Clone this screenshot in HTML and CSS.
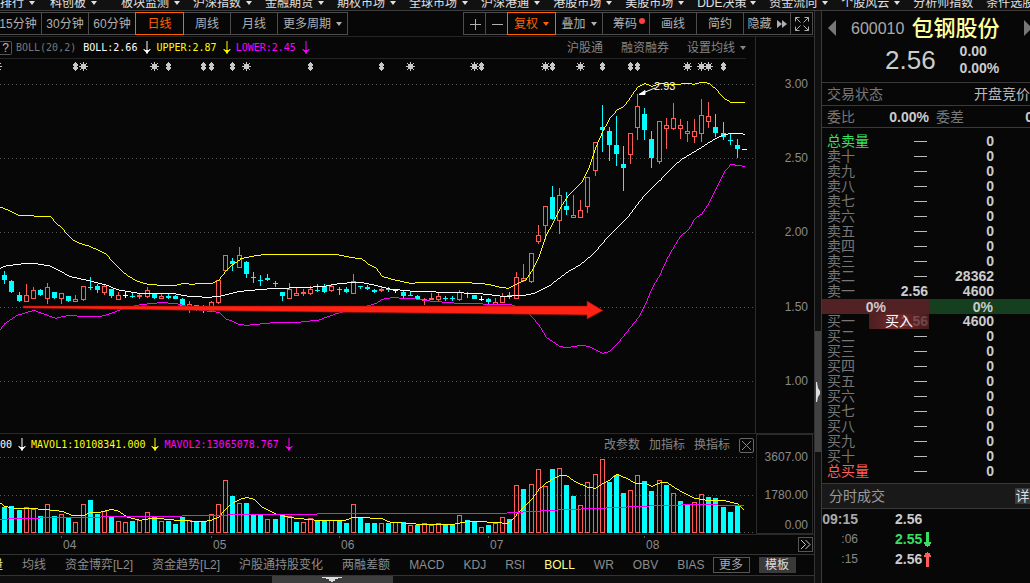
FILE: index.html
```html
<!DOCTYPE html>
<html lang="zh-CN">
<head>
<meta charset="utf-8">
<title>包钢股份 600010</title>
<link rel="stylesheet" href="styles.css">
</head>
<body>
<svg class="defs" aria-hidden="true">
  <symbol id="down" viewBox="0 0 8 14"><path d="M4 0v13M1 8v1h1v1h1v1M7 8v1H6v1H5v1" fill="none" stroke="currentColor"/><path d="M2 9h4v1H5v2H3v-2H2z" fill="currentColor"/></symbol>
</svg>
<div class="app">
  <nav class="menu">
    <a href="#" class="first">排行<i class="caret"></i></a>
    <a href="#" class="loose">科创板<i class="caret"></i></a>
    <a href="#">板块监测<i class="caret"></i></a>
    <a href="#">沪深指数<i class="caret"></i></a>
    <a href="#">金融期货<i class="caret"></i></a>
    <a href="#">期权市场<i class="caret"></i></a>
    <a href="#">全球市场<i class="caret"></i></a>
    <a href="#">沪深港通<i class="caret"></i></a>
    <a href="#">港股市场<i class="caret"></i></a>
    <a href="#">美股市场<i class="caret"></i></a>
    <a href="#"><span class="four">DDE决策</span><i class="caret"></i></a>
    <a href="#">资金流向<i class="caret"></i></a>
    <a href="#">个股风云<i class="caret"></i></a>
    <a href="#">分析师指数</a>
    <a href="#">条件选股</a>
  </nav>
  <div class="body">
    <main class="left">
      <div class="toolbar">
        <div class="group">
          <button class="tool lead">15分钟</button>
          <button class="tool">30分钟</button>
          <button class="tool">60分钟</button>
          <button class="tool on">日线</button>
          <button class="tool">周线</button>
          <button class="tool">月线</button>
          <button class="tool wide">更多周期<i class="caret"></i></button>
        </div>
        <div class="group">
          <button class="tool sq" aria-label="放大"><svg width="12" height="12"><path d="M6.5 1v11M1 6.5h11" stroke="currentColor"/></svg></button>
          <button class="tool sq" aria-label="缩小"><svg width="12" height="12"><path d="M1 6.5h11" stroke="currentColor"/></svg></button>
          <button class="tool on">复权<i class="caret"></i></button>
          <button class="tool">叠加<i class="caret"></i></button>
          <button class="tool">筹码<i class="dot"></i></button>
          <button class="tool">画线</button>
          <button class="tool">简约</button>
          <button class="tool">隐藏<svg width="10" height="8"><path d="M0 0l5 4-5 4zM5 0l5 4-5 4z" fill="currentColor"/></svg></button>
          <button class="tool sq" aria-label="全屏"><svg width="14" height="14" fill="none" stroke="currentColor"><path d="M.5 4.500v-4h4M.5.5l5 5M9.500.5h4v4M13.500.5l-5 5M.5 9.500v4h4M.5 13.500l5-5M13.500 9.500v4h-4M13.500 13.500l-5-5"/></svg></button>
        </div>
      </div>

      <section class="pane">
        <div class="plot">
          <header class="info ruled">
            <button class="help">?</button>
            <span class="mono dim">BOLL(20,2)</span>
            <span class="mono white">BOLL:2.66</span><svg class="down white"><use href="#down"/></svg>
            <span class="mono yellow">UPPER:2.87</span><svg class="down yellow"><use href="#down"/></svg>
            <span class="mono magenta">LOWER:2.45</span><svg class="down magenta"><use href="#down"/></svg>
            <span class="links wider">
              <a href="#">沪股通</a><a href="#">融资融券</a><a href="#">设置均线<i class="caret"></i></a>
            </span>
          </header>
          <svg id="price" class="chart" viewBox="0 59 755 374" preserveAspectRatio="xMaxYMin meet"></svg>
        </div>
        <svg class="axis" viewBox="755 37 59 396" width="59" height="396" preserveAspectRatio="xMinYMin meet">
          <path d="M755.500 37v396" class="rule"/>
          <text x="808" y="88">3.00</text><text x="808" y="162">2.50</text><text x="808" y="236">2.00</text><text x="808" y="311">1.50</text><text x="808" y="385">1.00</text>
        </svg>
      </section>

      <section class="pane">
        <div class="plot">
          <header class="info">
            <span class="mono white">00</span><svg class="down white"><use href="#down"/></svg>
            <span class="mono yellow">MAVOL1:10108341.000</span><svg class="down yellow"><use href="#down"/></svg>
            <span class="mono magenta">MAVOL2:13065078.767</span><svg class="down magenta"><use href="#down"/></svg>
            <span class="links"><a href="#">改参数</a><a href="#">加指标</a><a href="#">换指标</a>
              <button class="close" aria-label="关闭"><svg width="9" height="9"><path d="M0 0l9 9M9 0L0 9" stroke="currentColor"/></svg></button></span>
          </header>
          <svg id="volume" class="chart" viewBox="0 456 755 78" preserveAspectRatio="xMaxYMin meet"></svg>
        </div>
        <svg class="axis" viewBox="755 434 59 100" width="59" height="100">
          <rect x="756.500" y="434.500" width="56" height="99" class="rule"/>
          <text x="808" y="461">3607.00</text><text x="808" y="499">1780.00</text><text x="808" y="529">0.00</text>
        </svg>
      </section>

      <div class="dates">
        <svg id="months" class="chart" viewBox="0 536 755 18" preserveAspectRatio="xMaxYMin meet"></svg>
        <button class="more" aria-label="下一页"><svg width="11" height="11" fill="none" stroke="currentColor"><path d="M1 1l4.500 4.500L1 10M5.500 1L10 5.500 5.500 10"/></svg></button>
      </div>

      <nav class="tabs">
        <a href="#" class="cut active">量</a>
        <a href="#">均线</a><a href="#">资金博弈[L2]</a><a href="#">资金趋势[L2]</a><a href="#">沪股通持股变化</a><a href="#">两融差额</a>
        <a href="#">MACD</a><a href="#">KDJ</a><a href="#">RSI</a><a href="#" class="active">BOLL</a><a href="#">WR</a><a href="#">OBV</a><a href="#">BIAS</a>
        <span class="pair"><button class="box">更多</button><button class="box solid">模板</button></span>
      </nav>
      <div class="drawer"><div class="grip"><svg width="20" height="5"><path d="M0 0h20v1h-4v1h-3v2h-2v1h-2V4H7V2H4V1H0z" fill="#ddd"/></svg></div></div>
    </main>

    <div class="divider"><div class="handle"><svg width="5" height="20"><path d="M1 0h1l1 6 2 3v3l-2 3-1 5H1z" fill="#ddd"/></svg></div></div>

    <aside class="quote">
      <header class="stock">
        <button class="step" aria-label="上一只"><svg width="8" height="16"><path d="M8 0v16L0 8z" fill="#777"/></svg></button>
        <div class="ident">
          <h1><span class="code">600010</span><span class="name">包钢股份</span></h1>
          <div class="last"><span class="price">2.56</span><span class="chg">0.00<br>0.00%</span></div>
        </div>
        <button class="step" aria-label="下一只"><svg width="8" height="16"><path d="M0 0v16l8-8z" fill="#777"/></svg></button>
      </header>
      <div class="state"><span>交易状态</span><span class="phase">开盘竞价</span></div>
      <div class="ratio"><span>委比</span><b>0.00%</b><span>委差</span><b class="edge">0</b></div>
      <div class="book">
        <table id="asks"></table>
        <div class="bar"><b class="sell">0%</b><b class="buy">0%</b></div>
        <div class="bids"><table id="bids"></table><button class="order">买入</button></div>
      </div>
      <div class="title"><span>分时成交</span><button>详</button></div>
      <table class="ticks">
        <tr><td class="big">09:15</td><td>2.56</td></tr>
        <tr><td>:06</td><td class="green">2.55<svg width="8" height="15"><path d="M2 0h3v10h2v2H6v2H4v1H3v-1H1v-2H0v-2h2z" fill="#38e060"/></svg></td></tr>
        <tr><td>:15</td><td>2.56<svg width="8" height="15"><path d="M2 15h3V5h2V3H6V1H4V0H3v1H1v2H0v2h2z" fill="#ff5c57"/></svg></td></tr>
      </table>
    </aside>
  </div>
</div>
<script src="chart.js"></script>
</body>
</html>
```
FILE: styles.css
```css
* { box-sizing: border-box; }
body {
  margin: 0;
  background: #070707;
  color: #9c9c9c;
  font: 12px/16px "Liberation Sans", "Noto Sans CJK SC", sans-serif;
  overflow: hidden;
}
a { color: inherit; text-decoration: none; white-space: nowrap; }
button { font: inherit; color: inherit; background: none; border: 0; padding: 0; white-space: nowrap; }
svg { display: block; flex: none; }
.defs { position: absolute; width: 0; height: 0; }
.app { display: flex; flex-direction: column; height: 100vh; }

.caret {
  display: inline-block;
  border: 3px solid transparent;
  border-top: 4px solid currentColor;
  border-bottom: 0;
}
.white { color: #fff; }
.yellow { color: #ff0; }
.magenta { color: #f0f; }
.green { color: #38e060; }
.dim { color: #777; }

.menu {
  display: flex;
  align-items: flex-end;
  flex: none;
  height: 11px;
  overflow: hidden;
  background: #111;
  border-bottom: 1px solid #3c3c3c;
  color: #e0e0e0;
  line-height: 14px;
}
.menu a { display: flex; flex: none; align-items: center; gap: 5px; padding-right: 13px; }
.menu .first { padding-right: 15px; }
.menu .loose { padding-right: 24px; }
.menu .four { width: 48px; }

.body { display: flex; flex: 1; min-height: 0; }
.left { flex: 1; min-width: 0; display: flex; flex-direction: column; border-right: 1px solid #333; }

.toolbar {
  display: flex;
  justify-content: space-between;
  padding: 1px 1px 1px 0;
  border-bottom: 1px solid #242424;
  color: #b0b0b0;
}
.group { display: flex; }
.tool {
  display: flex;
  align-items: center;
  justify-content: center;
  gap: 5px;
  width: 48px;
  height: 23px;
  margin-left: -1px;
  border: 1px solid #4c4c4c;
}
.tool.lead { width: 42px; margin-left: 0; padding-right: 5px; border-left: 0; }
.tool.wide { width: 71px; }
.tool.sq { width: 23px; }
.tool.on { width: 49px; border-color: #ff6000; color: #ff6000; position: relative; }
.dot { width: 6px; height: 6px; margin: -6px -6px 0 -3px; border-radius: 50%; background: #ff4040; }

.pane { display: flex; border-bottom: 1px solid #2a2a2a; }
.plot { flex: 1; min-width: 0; }
.chart { width: 100%; flex: 1; min-width: 0; }
.axis text { fill: #8a8a8a; text-anchor: end; }
.chart text, .axis text { font: 11px "Liberation Sans", sans-serif; }
.axis text { font-size: 12px; }
.rule { fill: none; stroke: #2c2c2c; }

.info { display: flex; align-items: center; height: 22px; padding-right: 1px; }
.info.ruled { margin-right: 9px; border-bottom: 1px solid #242424; padding: 0; }
.mono { font: 10px/16px "DejaVu Sans Mono", monospace; white-space: nowrap; }
.help { width: 12px; height: 14px; border: 1px solid #555; border-left: 0; border-radius: 0 2px 2px 0; margin-right: 4px; line-height: 12px; color: #bbb; }
.info .dim { margin-right: 7px; }
.down { width: 8px; height: 14px; margin: 0 5px 0 6px; }
.links { display: flex; align-items: center; gap: 9px; margin-left: auto; color: #858585; }
.links.wider { gap: 18px; }
.links a { display: flex; align-items: center; gap: 5px; }
.close { display: flex; align-items: center; justify-content: center; width: 15px; height: 15px; border: 1px solid #666; border-radius: 2px; }

.dates { display: flex; align-items: center; justify-content: space-between; height: 20px; border-bottom: 1px solid #333; }
.dates .chart { max-width: calc(100% - 59px); }
.dates text { fill: #8a8a8a; font-size: 12px; }
.more { display: flex; align-items: center; justify-content: center; width: 15px; height: 15px; margin-right: 1px; border: 1px solid #555; color: #ccc; }

.tabs { display: flex; align-items: center; gap: 19px; height: 21px; border-bottom: 1px solid #333; color: #8c8c8c; overflow: hidden; }
.tabs .cut { margin-left: -9px; }
.tabs .active { color: #ffff8c; }
.pair { display: flex; gap: 9px; margin-left: -11px; }
.box { width: 37px; height: 16px; line-height: 14px; border: 1px solid #555; color: #aaa; }
.box.solid { background: #3a3a3a; border-color: #3a3a3a; color: #ddd; }

.drawer { flex: 1; padding-left: 33.4%; background: #0e0e0e; }
.grip { display: flex; justify-content: center; width: 121px; height: 100%; padding-top: 1px; background: #3e3e3e; }

.divider { flex: none; width: 6px; padding-top: 320px; background: #101010; }
.handle { display: flex; align-items: center; height: 121px; background: #424242; }

.quote { flex: none; width: 209px; border-left: 1px solid #3a3a3a; overflow: hidden; }
.quote b, .price, .chg, .book td + td { color: #ccc; }
.stock { display: flex; align-items: flex-start; height: 72px; padding: 9px 0 0 6px; border-bottom: 1px solid #3a3a3a; }
.step { flex: none; width: 8px; }
.ident { flex: none; width: 188px; padding-left: 15px; }
h1 { display: flex; align-items: center; gap: 7px; margin: 0; height: 18px; font-weight: 400; }
.code { font-size: 16px; color: #aaa; }
.name { font-size: 22px; font-weight: 500; color: #ffff9c; white-space: nowrap; }
.last { display: flex; align-items: center; gap: 24px; padding: 5px 0 0 34px; }
.price { font-size: 26px; line-height: 34px; }
.chg { font-weight: 700; font-size: 14px; line-height: 17px; }
.state, .ratio { display: flex; align-items: center; padding-left: 5px; font-size: 14px; color: #777; border-bottom: 1px solid #3a3a3a; white-space: nowrap; }
.state { height: 23px; justify-content: space-between; }
.phase { color: #bbb; }
.ratio { height: 22px; }
.ratio b { width: 74px; text-align: right; margin-right: 7px; }
.ratio .edge { width: auto; margin: 0 -3px 0 auto; }

.book { padding: 6px 0 4px; border-bottom: 1px solid #3a3a3a; }
table { border-collapse: collapse; }
.book table { width: 100%; table-layout: fixed; font-size: 14px; line-height: 15px; }
.book td { height: 15px; padding: 0; color: #777; white-space: nowrap; }
.book td:nth-child(1) { width: 48px; padding-left: 5px; }
.book td:nth-child(2) { width: 59px; padding-right: 1px; text-align: right; font-weight: 700; }
.book td:nth-child(3) { width: 65px; text-align: right; font-weight: 700; }
.book td.total-ask { color: #38e060; }
.book td.total-bid { color: #ff5c57; }
.none { display: block; width: 13px; height: 1px; margin: 0 1px 0 auto; background: #bbb; }
.bar { display: flex; height: 15px; font-size: 14px; line-height: 16px; }
.sell { width: 107px; padding-right: 43px; text-align: right; background: #522124; }
.buy { flex: 1; padding-right: 37px; text-align: right; background: #163f1f; }
.bids { position: relative; }
.order {
  position: absolute;
  top: 0;
  left: 47px;
  width: 60px;
  height: 15px;
  background: linear-gradient(90deg, rgba(82, 33, 36, .9), rgba(140, 50, 50, .8) 45%, rgba(82, 33, 36, .8));
  color: #fff;
  font-size: 14px;
  line-height: 15px;
}

.title { display: flex; align-items: center; justify-content: space-between; height: 25px; padding-left: 7px; background: #191919; border-bottom: 1px solid #3a3a3a; color: #999; font-size: 14px; }
.title button { width: 15px; height: 16px; line-height: 16px; background: #3a3a3a; color: #ddd; }
.ticks td { height: 20px; padding: 0; color: #888; }
.ticks td:first-child { width: 36px; text-align: right; }
.ticks .big { font-weight: 700; font-size: 14px; color: #aaa; }
.ticks td + td { padding-left: 37px; font-weight: 700; font-size: 14px; color: #ccc; }
.ticks td.green { color: #38e060; }
.ticks svg { display: inline-block; margin-left: 2px; vertical-align: -3px; }
```
FILE: chart.js
```js
const RED = '#ff5c57', CYAN = '#00ffff', WHITE = '#ffffff', YELLOW = '#ffff00', MAGENTA = '#ff00ff';
const NS = 'http://www.w3.org/2000/svg';
const price = document.getElementById('price');
const volume = document.getElementById('volume');
const months = document.getElementById('months');

function add(parent, tag, attrs, text) {
  const el = document.createElementNS(NS, tag);
  for (const k in attrs) el.setAttribute(k, attrs[k]);
  if (text) el.textContent = text;
  parent.appendChild(el);
  return el;
}
// Series are stored in thirds of a pixel, in blocks with their own origin.
const px = v => Math.round(v / 3);
const color = t => ({ r: RED, c: CYAN, w: WHITE })[t];

function rect(parent, x, y, w, h, fill) {
  add(parent, 'rect', { x, y, width: w, height: Math.max(1, h), fill });
}
function grid(parent, y) {
  add(parent, 'path', { d: `M0 ${y}.5H755`, stroke: '#555', 'stroke-dasharray': '1 3', 'shape-rendering': 'crispEdges' });
}
// Draws a curve as whole pixels, one run of equal height per rectangle.
function line(parent, stroke, blocks) {
  const pts = [];
  for (const [ox, oy, list] of blocks)
    for (const p of list.split(' ')) {
      const [x, y] = p.split(',').map(Number);
      pts.push([ox + x / 3, oy + y / 3]);
    }
  const ys = [];
  const x0 = Math.round(pts[0][0]), x1 = Math.round(pts[pts.length - 1][0]);
  let k = 0;
  for (let x = x0; x <= x1; x++) {
    while (k < pts.length - 2 && pts[k + 1][0] < x) k++;
    const [ax, ay] = pts[k], [bx, by] = pts[k + 1];
    ys.push(Math.floor(ay + (by - ay) * Math.min(1, Math.max(0, (x - ax) / (bx - ax || 1)))));
  }
  let d = '';
  for (let i = 0; i < ys.length;) {
    let j = i + 1;
    while (j < ys.length && ys[j] === ys[i]) j++;
    // A steep step fills the rows between the two columns.
    const prev = i ? ys[i - 1] : ys[i];
    const gap = ys[i] - prev;
    if (Math.abs(gap) > 1) d += `M${x0 + i} ${gap > 0 ? prev + 1 : ys[i]}h1v${Math.abs(gap)}h-1z`;
    d += `M${x0 + i} ${ys[i]}h${j - i}v1h${i - j}z`;
    i = j;
  }
  add(parent, 'path', { d, fill: stroke });
}

[84, 158, 232, 307, 381].forEach(y => grid(price, y));
[457, 495, 532].forEach(y => grid(volume, y));

// Event marks: s = sun, d = diamond
const marks = 's-3 d75 s83 s154 d168 d203 d211 d232 s246 d310 d381 s410 s474 d481 s545 d552 s580 d602 d630 d637 s687 s701 s708 d723';
for (const m of marks.split(' ')) {
  const x = +m.slice(1), sun = m[0] === 's';
  add(price, 'path', {
    transform: `translate(${x} 66)`, fill: '#c8c8c8', 'shape-rendering': 'crispEdges',
    d: sun ? 'M-2-2h5v5h-5zM0-4h1v9H0zM-4 0h9v1h-9zM-3-3h1v1h-1zM3-3h1v1H3zM-3 3h1v1h-1zM3 3h1v1H3z'
           : 'M0-4h1v1h1v1h1v2H2v1h1v2H2v1H1v1H0V4h-1V3h-1V1h1V0h-1v-2h1v-1h1z'
  });
}

// type x high top bottom low
const candles = [
  [0, 230, `c13 123 135 150 162|c34 150 153 186 189|c58 186 195 213 216|r79 162 195 215 215|r100 171 180 207 207|c121 177 180 195 198|r142 159 171 207 222|c163 186 186 204 207|r184 189 189 206 222|c205 198 198 213 216|r226 195 207 215 215|r250 168 168 209 213|c271 141 171 174 180|c292 162 168 180 189|r313 165 168 188 195|c334 177 177 198 204|r355 186 195 209 209|w376 186 195 196 204|c397 189 198 200 204|r418 192 195 201 207|r442 171 180 201 204|c463 189 189 204 207|r484 192 198 206 206|c505 192 198 204 207|c526 195 198 207 207|c547 204 207 228 240|r568 213 222 234 249|c589 225 225 229 243|c610 225 239 243 249|r634 213 216 243 243|r655 150 150 219 222|r676 75 75 123 126|c697 84 93 102 123|r718 51 75 113 113|c739 93 96 132 144|c760 126 141 143 159`],
  [240, 230, `c61 135 150 152 168|c82 132 144 150 153|c106 153 159 161 171|c127 186 186 198 213|r148 159 177 206 206|r169 171 189 197 197|r190 177 186 192 198|r211 168 177 192 195|c232 162 180 182 186|c253 162 168 186 189|r274 162 168 182 186|c298 171 177 179 195|c319 171 177 186 189|r340 132 153 191 191|c361 168 168 170 177|c382 165 171 177 180|c403 177 180 186 189|r424 168 177 182 186|c445 171 177 179 186|w466 177 180 182 189|c490 180 186 198 204|c511 186 195 197 198|c532 195 198 207 207|r553 204 207 213 225|r574 189 204 209 210|r595 186 198 209 213|c616 198 204 206 213|c637 198 204 206 213|r658 180 186 209 213|c682 186 189 191 204|c703 195 195 207 207|w724 198 207 209 213|c745 204 207 216 222|r766 204 216 224 224|r787 189 198 218 219|c808 186 195 197 206|r829 126 141 206 206|r850 102 144 153 156|r874 69 69 155 159`],
  [500, 75, `r115 450 481 500 507|r136 393 393 452 495|c157 333 366 432 435|r178 339 360 437 477|c199 351 393 405 420|r220 360 421 430 430|r241 375 405 430 430|r262 306 306 395 414|r286 201 201 287 303|c307 90 156 165 231|c328 156 168 210 258|c349 123 210 237 273|c370 213 267 279 348|r391 174 174 239 267|r412 57 93 158 195|c433 99 117 165 195|c454 168 192 249 279|r478 138 138 260 267|r499 129 150 161 222|r520 84 129 161 165|r541 132 150 161 192|r562 138 168 176 201|r583 132 168 185 204|r604 72 120 176 201|r625 81 123 140 159|c646 117 156 174 186|c670 141 174 186 195|c691 177 195 197 210|c712 192 210 222 249|w733 222 222 223 223`]
];
for (const [ox, oy, list] of candles)
  for (const item of list.split('|')) {
    const t = item[0];
    const [cx, hi, top, bot, lo] = item.slice(1).split(' ').map(Number);
    const x = ox + Math.floor(cx / 3), y1 = oy + px(hi), y2 = oy + px(top), y3 = oy + px(bot), y4 = oy + px(lo);
    const c = color(t), h = y3 - y2;
    if (t === 'r' && h > 2) {
      if (y2 > y1) rect(price, x, y1, 1, y2 - y1, c);
      if (y4 > y3) rect(price, x, y3, 1, y4 - y3, c);
      add(price, 'rect', { x: x - 1.5, y: y2 + 0.5, width: 4, height: h - 1, fill: 'none', stroke: c });
    } else {
      rect(price, x, y1, 1, y4 - y1, c);
      rect(price, x - 2, y2, 5, h, c);
    }
  }

line(price, YELLOW, [
  [0, 0, '0,621 30,633 54,645 100,648 150,648 165,668 180,680'],
  [0, 230, '190,1 205,18 220,32 240,41 265,48 290,59 315,71 335,93 360,119 380,136 410,154 440,162 480,166 525,166 550,160 575,163 600,160 635,160 655,150 676,123 697,104 718,90'],
  [240, 230, '0,86 35,79 75,73 285,73 330,82 365,87 385,103 405,113 425,139 460,149 510,160 550,157 670,157 745,163 780,172'],
  [500, 75, '0,637 25,640 50,627 75,615 94,588 115,545 136,482 157,445 178,400 199,368 220,345 241,325 262,285 286,215 307,168 328,130 349,106 370,95 391,65 412,36 433,25 455,34 480,25 505,30 540,27 560,24 580,28 605,21 625,25 646,42 670,70 691,82 733,82']
]);
line(price, WHITE, [
  [0, 230, '0,115 15,108 70,101 105,101 145,107 180,124 210,140 260,151 320,166 350,179 410,189 520,191 565,199 625,202 660,198 715,185'],
  [240, 230, '0,184 30,181 90,176 200,172 250,169 300,160 360,157 400,165 450,177 520,184 620,187 720,191 778,198'],
  [500, 75, '0,665 70,661 100,655 150,630 200,592 240,569 280,535 330,477 385,422 430,363 480,315 520,273 541,255 600,219 646,190 670,180 691,175 720,175 733,178']
]);
line(price, MAGENTA, [
  [0, 230, '0,297 12,281 50,256 100,241 130,252 165,265 205,256 240,259 300,259 330,251 370,235 420,224 480,218 525,220 565,230 600,241 655,247 676,267 697,274 718,284'],
  [240, 230, '0,283 18,286 100,278 180,276 235,270 290,250 330,240 380,228 405,221 425,208 455,203 520,206 570,213 640,219 715,220 745,225 808,223 829,230 860,248 880,267 900,292'],
  [500, 75, '136,787 157,800 178,814 199,818 240,811 265,814 290,826 307,835 328,829 349,808 385,763 412,730 433,690 454,640 475,605 500,550 520,515 541,482 562,467 583,431 604,417 625,385 646,340 670,292 691,268 710,271 733,274']
]);

add(price, 'path', { d: 'M23 306L240 306 500 306H587V301L603 310.500 587 319V315L500 314 240 311 23 308z', fill: '#ff2212', stroke: '#8a0f08', 'stroke-width': 0.6 });
add(price, 'path', { d: 'M639 94.500L655 88M639 94.500l6-4v4z', fill: '#fff', stroke: '#fff' });
add(price, 'text', { x: 654, y: 90, fill: '#fff' }, '2.93');

const volumes = [
  [0, 'c13 231|c34 228|c58 240|r79 231|r100 237|c121 258|r142 222|c163 258|r184 252|c205 264|r226 276|r250 222|c271 210|c292 252|r313 243|c334 258|r355 273|r376 276|c397 273|r418 270|r442 246|c463 261|r484 273|c505 273|c526 282|c547 261|r568 270|c589 276|c610 276|r634 252|r655 222|r676 150|c697 198|r718 219|c739 219|c760 252|c781 255|r802 267|c826 267|c847 255|r868 258|c889 276|r910 276|r931 264|c952 270|c973 273|r994 270|c1018 270|c1039 279|r1060 222|c1081 261|c1102 279'],
  [370, 'c13 279|r34 279|c55 279|r76 276|c100 276|r121 285|c142 285|r163 279|r184 285|r205 279|c226 285|c247 285|r268 255|c292 270|c313 276|r334 291|c355 285|r376 279|r397 261|c418 267|r439 165|c460 177|r484 162|r505 117|r526 168|c547 117|r568 114|c589 165|c610 198|r631 225|r652 156|r676 132|r697 87'],
  [580, 'c88 156|c109 135|c130 189|r151 180|r172 135|c193 153|c214 183|r238 150|c259 165|r280 189|c301 213|c322 225|r343 216|r364 192|c385 201|c406 204|c430 231|c451 246|c472 225']
];
for (const [ox, list] of volumes)
  for (const item of list.split('|')) {
    const [cx, top] = item.slice(1).split(' ').map(Number);
    const x = ox + Math.floor(cx / 3), y = 430 + px(top);
    if (item[0] === 'r') add(volume, 'rect', { x: x - 1.5, y: y + 0.5, width: 4, height: 532 - y, fill: 'none', stroke: RED });
    else rect(volume, x - 2, y, 5, 533 - y, CYAN);
  }
line(volume, YELLOW, [
  [0, 430, '0,219 13,229 30,233 50,236 100,236 150,240 184,244 215,256 250,256 270,247 300,246 335,238 355,244 380,261 418,271 463,264 520,270 600,275 630,272 655,261 676,236 700,218 718,208 739,202 760,208 785,232 826,252 870,263 930,269 973,273 1035,271 1060,261 1105,263'],
  [370, 430, '0,264 35,266 60,277 110,280 150,283 247,283 292,274 350,276 410,280 425,270 442,250 463,228 484,208 505,178 526,160 547,147 568,136 589,137 610,153 652,172 676,175 697,160 718,150'],
  [580, 430, '109,132 140,146 165,160 193,159 214,169 238,159 259,157 280,171 301,184 322,195 343,205 385,212 430,211 472,222 490,241']
]);
line(volume, MAGENTA, [
  [0, 430, '0,268 70,265 215,262 390,260 620,257 708,254 830,253 1070,251'],
  [370, 430, '30,250 410,249 540,241 600,238 660,236'],
  [580, 430, '100,233 160,230 230,227 335,224 490,226']
]);

[['04', 61], ['05', 211], ['06', 339], ['07', 488], ['08', 644]].forEach(([m, x]) => {
  add(months, 'path', { d: `M${x + 0.5} 536v2`, stroke: '#555' });
  add(months, 'text', { x: x + 2, y: 549 }, m);
});

// Order book
const num = ['十', '九', '八', '七', '六', '五', '四', '三', '二', '一'];
function row(label, p, qty, cls) {
  return `<tr><td class="${cls || ''}">${label}</td><td>${p || '<i class="none"></i>'}</td><td>${qty}</td><td></td></tr>`;
}
document.getElementById('asks').innerHTML = row('总卖量', '', 0, 'total-ask') +
  num.map((n, i) => row('卖' + n, i === 9 ? '2.56' : '', i === 9 ? 4600 : i === 8 ? 28362 : 0)).join('');
document.getElementById('bids').innerHTML =
  num.slice().reverse().map((n, i) => row('买' + n, i === 0 ? '2.56' : '', i === 0 ? 4600 : 0)).join('') +
  row('总买量', '', 0, 'total-bid');
```
